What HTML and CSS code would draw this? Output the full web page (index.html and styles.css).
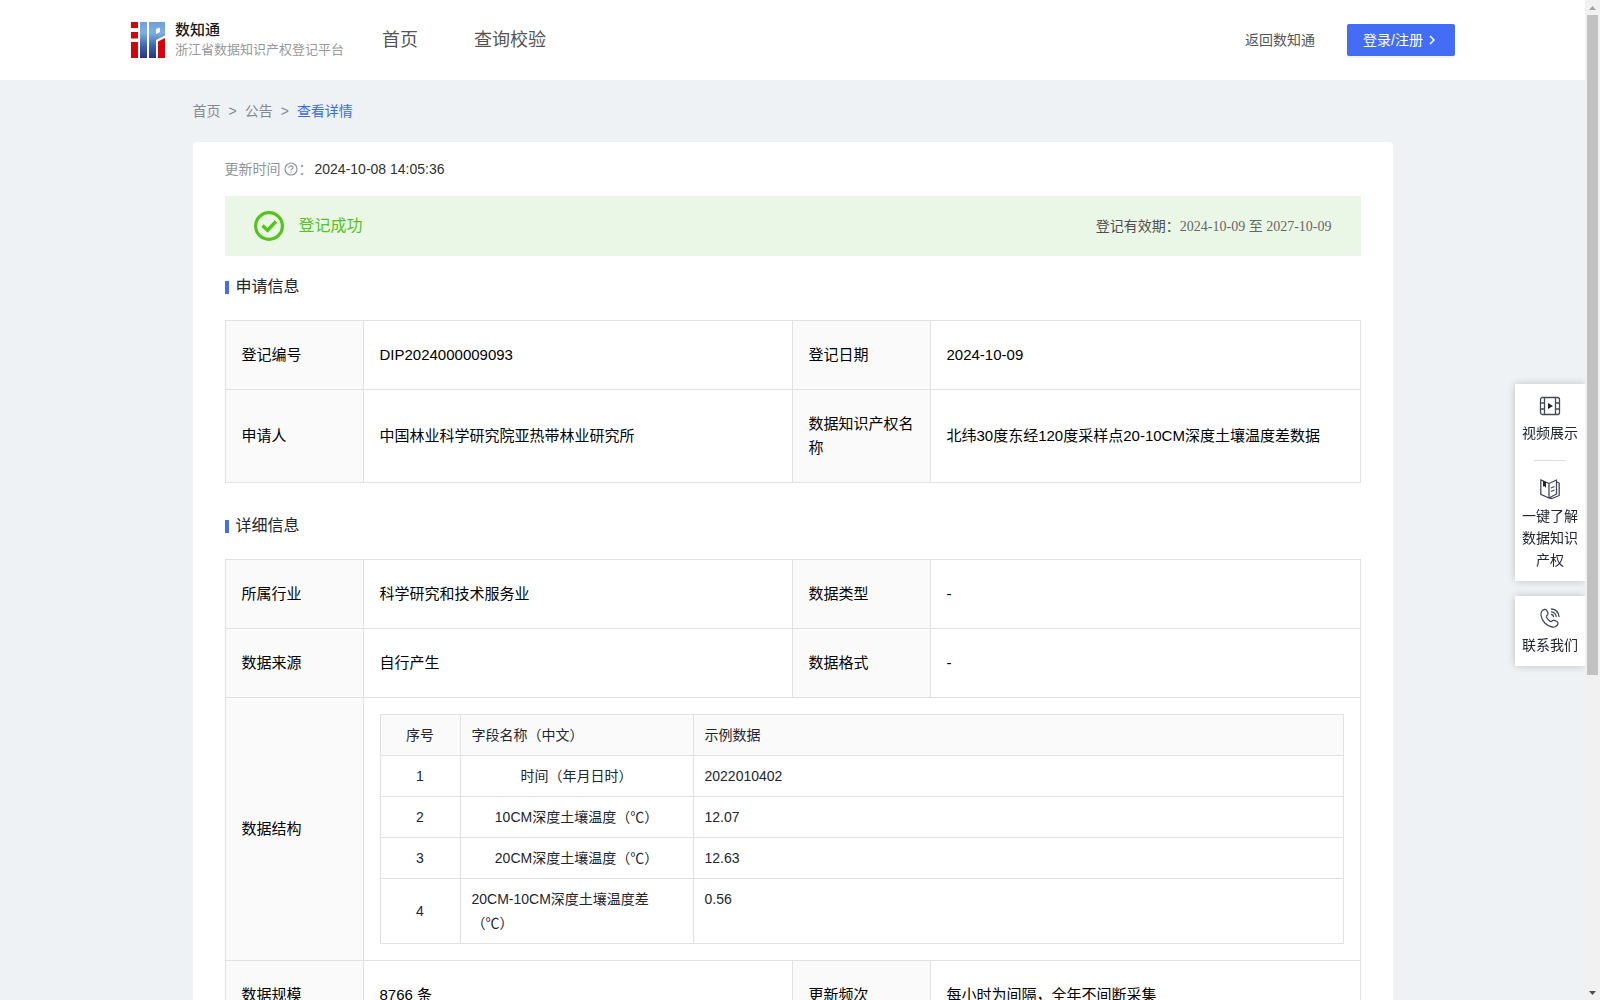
FILE: index.html
```
<!DOCTYPE html>
<html lang="zh-CN">
<head>
<meta charset="utf-8">
<title>浙江省数据知识产权登记平台</title>
<link rel="stylesheet" href="styles.css">
</head>
<body>
<div class="page">
  <header class="header">
    <a class="brand" href="#">
      <svg class="brand-logo" width="34" height="36" viewBox="0 0 34 36" aria-hidden="true">
        <defs>
          <linearGradient id="blue" x1="0" y1="0" x2="0" y2="36" gradientUnits="userSpaceOnUse">
            <stop offset="0" stop-color="#6f9fdb"/>
            <stop offset=".3" stop-color="#7db0e6"/>
            <stop offset=".65" stop-color="#3f66b0"/>
            <stop offset="1" stop-color="#26377f"/>
          </linearGradient>
        </defs>
        <path fill="#d40508" d="M0 0h7v6H0zM0 10h7v6.500H0zM0 20h7v16H0zM27 19.500L34 16v20h-7z"/>
        <path fill="url(#blue)" d="M9 0h7v36H9zM18 0h16v13.500L25 18v18h-7z"/>
        <path fill="#fff" d="M25 7l4-1.500V10l-4 2z"/>
      </svg>
      <span class="brand-text">
        <strong class="brand-name">数知通</strong>
        <span class="brand-sub">浙江省数据知识产权登记平台</span>
      </span>
    </a>
    <nav class="nav">
      <a href="#">首页</a>
      <a href="#">查询校验</a>
    </nav>
    <a class="back" href="#">返回数知通</a>
    <button class="login" type="button">登录/注册
      <svg width="14" height="14" viewBox="0 0 14 14" aria-hidden="true"><path d="M5 3l4 4-4 4" fill="none" stroke="#fff" stroke-width="1.500"/></svg>
    </button>
  </header>

  <main class="main">
    <nav class="crumbs">
      <a href="#">首页</a><span>&gt;</span><a href="#">公告</a><span>&gt;</span><a class="current" href="#">查看详情</a>
    </nav>

    <section class="card">
      <div class="updated">
        <span class="updated-label">更新时间</span>
        <svg width="16" height="16" viewBox="0 0 16 16" fill="none" stroke="#909399" aria-hidden="true">
          <circle cx="8" cy="8" r="6" stroke-width="1.200"/>
          <path d="M6 6.800C6 4.300 10 4.300 10 6.600C10 7.900 8 7.900 8 9.300M8 10.300v1.200" stroke-width="1.200"/>
        </svg>
        <span class="updated-label">：</span>
        <time class="updated-time">2024-10-08 14:05:36</time>
      </div>

      <div class="banner">
        <svg width="30" height="30" viewBox="0 0 30 30" fill="none" stroke="#52c41a" aria-hidden="true">
          <circle cx="15" cy="15" r="13.400" stroke-width="3.200"/>
          <path d="M8.500 14.500l5 4.800 8.500-8.800" stroke-width="3.400"/>
        </svg>
        <span class="banner-status">登记成功</span>
        <span class="banner-valid">登记有效期：<span class="banner-dates">2024-10-09 至 2027-10-09</span></span>
      </div>

      <h2 class="title">申请信息</h2>
      <table class="info">
        <colgroup><col class="col-label"><col class="col-value"><col class="col-label"><col></colgroup>
        <tbody>
          <tr><th scope="row">登记编号</th><td>DIP2024000009093</td><th scope="row">登记日期</th><td>2024-10-09</td></tr>
          <tr><th scope="row">申请人</th><td>中国林业科学研究院亚热带林业研究所</td><th scope="row">数据知识产权名称</th><td>北纬30度东经120度采样点20-10CM深度土壤温度差数据</td></tr>
        </tbody>
      </table>

      <h2 class="title title-next">详细信息</h2>
      <table class="info">
        <colgroup><col class="col-label"><col class="col-value"><col class="col-label"><col></colgroup>
        <tbody>
          <tr><th scope="row">所属行业</th><td>科学研究和技术服务业</td><th scope="row">数据类型</th><td>-</td></tr>
          <tr><th scope="row">数据来源</th><td>自行产生</td><th scope="row">数据格式</th><td>-</td></tr>
          <tr>
            <th scope="row">数据结构</th>
            <td class="nested" colspan="3">
              <table class="fields">
                <colgroup><col class="col-index"><col class="col-name"><col></colgroup>
                <thead>
                  <tr><th scope="col" class="index">序号</th><th scope="col">字段名称（中文）</th><th scope="col">示例数据</th></tr>
                </thead>
                <tbody>
                  <tr><td class="index">1</td><td class="name">时间（年月日时）</td><td>2022010402</td></tr>
                  <tr><td class="index">2</td><td class="name">10CM深度土壤温度（℃）</td><td>12.07</td></tr>
                  <tr><td class="index">3</td><td class="name">20CM深度土壤温度（℃）</td><td>12.63</td></tr>
                  <tr><td class="index">4</td><td>20CM-10CM深度土壤温度差（℃）</td><td>0.56</td></tr>
                </tbody>
              </table>
            </td>
          </tr>
          <tr><th scope="row">数据规模</th><td>8766 条</td><th scope="row">更新频次</th><td>每小时为间隔，全年不间断采集</td></tr>
        </tbody>
      </table>
    </section>
  </main>
</div>

<div class="scrollbar" aria-hidden="true">
  <svg width="15" height="15" viewBox="0 0 15 15"><path d="M4 10l3.500-4L11 10z" fill="#a3a3a3"/></svg>
  <div class="scrollbar-track"><div class="scrollbar-thumb"></div></div>
  <svg width="15" height="15" viewBox="0 0 15 15"><path d="M4 6l3.500 4L11 6z" fill="#505050"/></svg>
</div>

<aside class="tools">
  <div class="tools-box">
    <a class="tool" href="#">
      <svg width="22" height="22" viewBox="0 0 22 22" fill="none" stroke="#454955" stroke-width="1.300" aria-hidden="true">
        <rect x="1.500" y="2.500" width="19" height="17" rx="2"/>
        <path d="M5.500 2.500v17M16.500 2.500v17M1.500 8h4M1.500 14h4M16.500 8h4M16.500 14h4"/>
        <path d="M9 8l5 3-5 3z" fill="#222" stroke="none"/>
      </svg>
      视频展示
    </a>
    <a class="tool tool-divided" href="#">
      <svg width="22" height="22" viewBox="0 0 22 22" fill="none" stroke="#454955" stroke-width="1.300" stroke-linejoin="round" aria-hidden="true">
        <path d="M10 5.500L1.800 1.800v14.500L10 20V5.500L17.500 2v14L10 20M17.500 4l2.700 1v12.500L13 20.500l-3-.5"/>
        <path d="M12 10l3.500-1.500M12 13.500l3.500-1.500"/>
        <path d="M4 2.800l3 1.400v5.600L5.500 8.200 4 8.500z" fill="#222" stroke="none"/>
      </svg>
      一键了解数据知识产权
    </a>
  </div>
  <div class="tools-box">
    <a class="tool" href="#">
      <svg width="22" height="22" viewBox="0 0 22 22" fill="none" stroke="#454955" stroke-width="1.300" stroke-linecap="round" stroke-linejoin="round" aria-hidden="true">
        <path d="M5.500 2.500C3 3 1.500 5.500 2 8.500c1 5.500 5.500 10.500 11 11.500 3 .5 5.500-1 6-3.500.2-1-.2-1.500-1-2l-2.500-1.200c-1-.5-1.500-.3-2.200.5-.8 1-1.500 1-2.500.2-1.500-1-2.500-2.300-3.200-3.800-.4-1-.2-1.500.7-2.200.8-.7 1-1.300.6-2.200L7.700 3.500c-.5-.9-1.200-1.200-2.200-1z"/>
        <path d="M12.500 2c4 .3 7 3.300 7.500 7.500M12.500 4.800c2.600.4 4.300 2.200 4.700 4.700M12.500 7.500c1.300.3 1.800 1 2 2"/>
      </svg>
      联系我们
    </a>
  </div>
</aside>
</body>
</html>
```
FILE: styles.css
```
* {
  box-sizing: border-box;
}

body {
  display: grid;
  grid-template-columns: minmax(0, 1fr) 15px;
  margin: 0;
  height: 100vh;
  overflow: hidden;
  font: 14px/24px "Liberation Sans", "Noto Sans CJK SC", sans-serif;
  color: #1f2329;
  background: #eef2f5;
  text-spacing-trim: space-all;
}

a {
  color: inherit;
  text-decoration: none;
}

svg {
  flex: none;
}

/* Scrolling area */
.page {
  height: 100vh;
  overflow-y: auto;
  scrollbar-width: none;
}

.scrollbar {
  display: flex;
  flex-direction: column;
  height: 100vh;
  background: #f1f1f1;
}

.scrollbar-track {
  flex: 1;
  padding: 0 2px;
}

.scrollbar-thumb {
  height: 68%;
  background: #c1c1c1;
}

/* Header */
.header {
  display: flex;
  align-items: center;
  height: 80px;
  padding: 0 130px 0 131px;
  background: #fff;
}

.brand {
  display: flex;
  align-items: center;
  gap: 10px;
}

.brand-text {
  display: flex;
  flex-direction: column;
}

.brand-name {
  font-size: 15px;
  line-height: 20px;
  font-weight: 500;
  color: #1a1a1a;
}

.brand-sub {
  font-size: 13px;
  line-height: 20px;
  color: #999;
}

.nav {
  display: flex;
  gap: 56px;
  margin-left: 38px;
  font-size: 18px;
  color: #555;
}

.back {
  margin-left: auto;
  color: #555;
}

.login {
  display: flex;
  align-items: center;
  gap: 2px;
  height: 32px;
  margin-left: 32px;
  padding: 0 16px;
  border: 0;
  border-radius: 2px;
  font: inherit;
  color: #fff;
  background: #446df6;
  box-shadow: 0 2px 0 rgba(0, 0, 0, .05);
}

/* Content */
.main {
  max-width: 1200px;
  margin: 0 auto;
  padding-bottom: 404px;
}

.crumbs {
  display: flex;
  gap: 8px;
  padding: 19px 0;
  color: #86898e;
}

.crumbs .current {
  color: #3a69f5;
}

.card {
  padding: 15px 32px 32px;
  border-radius: 4px;
  background: #fff;
}

.updated {
  display: flex;
  align-items: center;
}

.updated svg {
  margin-left: 2px;
}

.updated-label {
  color: #909399;
}

.updated-time {
  margin-left: 2px;
  color: #303133;
}

.banner {
  display: flex;
  align-items: center;
  gap: 15px;
  height: 60px;
  margin-top: 15px;
  padding: 0 29px;
  background: #ebf7e6;
}

.banner-status {
  font-size: 16px;
  color: #52c41a;
}

.banner-valid {
  margin-left: auto;
  color: #4e4e4e;
}

.banner-dates {
  font-family: "Liberation Serif", "Noto Sans CJK SC", serif;
  color: #666;
}

.title {
  display: flex;
  align-items: center;
  gap: 7px;
  margin: 19px 0 21px;
  font-size: 16px;
  line-height: 24px;
  font-weight: 400;
  color: #23252f;
}

.title::before {
  content: "";
  width: 4px;
  height: 13px;
  background: #446df6;
}

.title-next {
  margin-top: 31px;
}

/* Tables */
table {
  width: 100%;
  table-layout: fixed;
  border-collapse: separate;
  border-spacing: 0;
  border: 1px solid #e1e1e1;
  border-width: 1px 0 0 1px;
}

th,
td {
  border: 1px solid #e1e1e1;
  border-width: 0 1px 1px 0;
  text-align: left;
  font-weight: 400;
}

th {
  background: #fafafa;
}

.info {
  font-size: 15px;
  color: #000;
}

.info th,
.info td {
  padding: 22px 16px;
}

.col-label {
  width: 138px;
}

.col-value {
  width: 429px;
}

.info .nested {
  padding: 16px;
}

.fields {
  font-size: 14px;
  color: #23252f;
}

.info .fields th,
.info .fields td {
  padding: 8px 11px;
  vertical-align: top;
}

.info .fields .index {
  text-align: center;
  vertical-align: middle;
}

.info .fields .name {
  text-align: center;
}

.col-index {
  width: 80px;
}

.col-name {
  width: 233px;
}

/* Floating shortcuts */
.tools {
  position: fixed;
  top: 384px;
  right: 15px;
  display: flex;
  flex-direction: column;
  gap: 15px;
  width: 70px;
  clip-path: inset(-12px 0 -12px -12px);
}

.tools-box {
  padding: 0 7px;
  background: #fff;
  box-shadow: 0 0 8px rgba(0, 0, 0, .2);
}

.tool {
  display: flex;
  flex-direction: column;
  align-items: center;
  gap: 5px;
  padding: 11px 0 10px;
  line-height: 22px;
  text-align: center;
  color: #23252f;
}

.tool-divided {
  padding-top: 6px;
}

.tool-divided::before {
  content: "";
  width: 32px;
  height: 1px;
  margin-bottom: 12px;
  background: #dcdfe6;
}
```
